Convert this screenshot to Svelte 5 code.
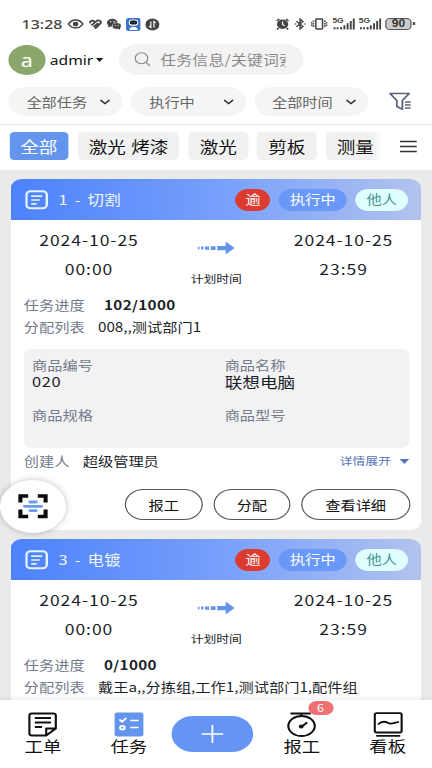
<script lang="ts">
  const filters = ['全部任务', '执行中', '全部时间'];
  const tabs = ['全部', '激光 烤漆', '激光', '剪板', '测量'];
  const signals = [1, 2];

  let activeTab = $state('全部');

  const tasks = [
    {
      title: '1 - 切割',
      progress: '102/1000',
      assigned: '008,,测试部门1',
      detail: { code: '020', product: '联想电脑', creator: '超级管理员' }
    },
    {
      title: '3 - 电镀',
      progress: '0/1000',
      assigned: '戴王a,,分拣组,工作1,测试部门1,配件组',
      detail: null
    }
  ];
</script>

<div class="screen">
  <header class="status">
    <span class="clock">13:28</span>
    <svg class="s-eye" width="14" height="12" viewBox="0 0 14 12" fill="none" stroke="#444" stroke-width="1.5">
      <path d="M1 6C4 .8 10 .8 13 6C10 11.2 4 11.2 1 6Z" />
      <circle cx="7" cy="6" r="2.3" fill="#444" stroke="none" />
    </svg>
    <svg width="11" height="11" viewBox="0 0 11 11" fill="none" stroke="#444" stroke-width="1.7">
      <path d="M1 4.3C.8 1.7 3.2 .8 4.7 2.6M2.2 6.4L6 2.5C8 .3 11.3 2 9.6 4.6L5.2 9.8M4 8.2L7.8 4.2" />
    </svg>
    <svg width="12" height="12" viewBox="0 0 12 12">
      <ellipse cx="4.6" cy="4.7" rx="4.5" ry="3.9" fill="#444" />
      <path d="M1.5 7L1 9.6L4 8.2Z" fill="#444" />
      <ellipse cx="8.3" cy="8" rx="3.7" ry="3.2" fill="#444" stroke="#fff" stroke-width=".5" />
      <path d="M9 10.6L11 11.7L10.8 9.4Z" fill="#444" />
      <g fill="#fff">
        <circle cx="3.2" cy="3.6" r=".6" /><circle cx="6" cy="3.6" r=".6" />
        <circle cx="7.1" cy="7.4" r=".5" /><circle cx="9.4" cy="7.4" r=".5" />
      </g>
    </svg>
    <svg width="12.5" height="13" viewBox="0 0 13 13" preserveAspectRatio="none">
      <rect width="13" height="13" rx="2.5" fill="#3d74cd" />
      <rect x="2.4" y="1.4" width="8.2" height="6.4" rx="3" fill="#fff" />
      <rect x="3.3" y="2.6" width="6.4" height="3.9" rx="1.8" fill="#111" />
      <path d="M3 12C3 7.8 10 7.8 10 12Z" fill="#fff" />
      <path d="M4.8 4.4h1M7.2 4.4h1" stroke="#5ad" stroke-width=".8" />
    </svg>
    <svg width="12" height="13" viewBox="0 0 12 13">
      <ellipse cx="6" cy="6.5" rx="5.9" ry="6.1" fill="#444" />
      <path d="M4.7 3.5V9.5L3.1 8M7.3 9.5V3.5L8.9 5" fill="none" stroke="#fff" stroke-width="1" />
    </svg>
    <div class="status-right">
      <svg width="11" height="12" viewBox="0 0 11 12">
        <circle cx="5.5" cy="6.2" r="4.7" fill="#444" />
        <path d="M.6 3L2.8 .9M10.4 3L8.2 .9M2 10L1 11.5M9 10L10 11.5" stroke="#444" stroke-width="1.4" />
        <path d="M5.5 3.6V6.5L7.3 7.8" fill="none" stroke="#fff" stroke-width="1" />
      </svg>
      <svg width="10" height="12" viewBox="0 0 10 12" fill="none" stroke="#444" stroke-width="1.2">
        <path d="M2 3.2L7.5 8.5L5 11V1L7.5 3.5L2 8.8" />
        <path d="M.3 6h1.5M8.2 6h1.5" />
      </svg>
      <svg width="14" height="12" viewBox="0 0 14 12" fill="none" stroke="#444" stroke-width="1.3">
        <rect x="4.2" y="1" width="5.6" height="10" rx=".8" />
        <path d="M2.2 2.5V9.5M.7 4V8M11.8 2.5V9.5M13.3 4V8" stroke-dasharray="1.6 .8" />
      </svg>
      {#each signals as s (s)}
        <span class="signal">
          <span class="net">5G</span>
          <svg width="19" height="12" viewBox="0 0 19 12" fill="#444">
            <path d="M1 9.3h1.6v2H1zM3.5 9.3h1.6v2H3.5zM6.5 9h1.6v2.5H6.5zM9.2 7.3h1.6v4.2H9.2zM11.9 5.2h1.6v6.3h-1.6zM14.5 3h1.6v8.5h-1.6zM17 .5h1.6v11H17z" />
          </svg>
        </span>
      {/each}
      <span class="battery">90</span>
    </div>
  </header>

  <div class="account">
    <div class="avatar">a</div>
    <span class="user">admir</span>
    <span class="caret"></span>
    <div class="search">
      <svg width="14" height="15" viewBox="0 0 14 15" fill="none" stroke="#888" stroke-width="1.1">
        <ellipse cx="5.9" cy="6.3" rx="5.2" ry="5.5" />
        <path d="M9.6 10.4L13 13.8" />
      </svg>
      <span>任务信息/关键词索</span>
    </div>
  </div>

  <div class="filters">
    {#each filters as f}
      <button class="filter">
        <span>{f}</span>
        <svg width="9" height="6" viewBox="0 0 9 6" fill="none" stroke="#222" stroke-width="1.3">
          <path d="M.8 1L4.5 4.6L8.2 1" />
        </svg>
      </button>
    {/each}
    <svg class="funnel" width="19" height="19" viewBox="0 0 19 19" fill="none" stroke="#596276" stroke-width="1.5">
      <path d="M1 1.5H17L11.3 8.5V17.3L6.7 14.5V8.5Z" stroke-linejoin="round" />
      <path d="M13.4 10h4.8M13.4 13h4.8M13.4 16h4.8" />
    </svg>
  </div>

  <nav class="tabs">
    <div class="tab-list">
      {#each tabs as tab}
        <button class="tab" class:active={tab === activeTab} onclick={() => (activeTab = tab)}>{tab}</button>
      {/each}
    </div>
    <svg width="15" height="13" viewBox="0 0 15 13" stroke="#333" stroke-width="1.4">
      <path d="M.3 1.5H14.300M.3 6.5H14.300M.3 11.500H14.300" />
    </svg>
  </nav>

  <main class="list">
    {#each tasks as task}
      <article class="card">
        <div class="card-head">
          <svg width="19" height="20" viewBox="0 0 19 20" fill="none" stroke="#e6f4ff">
            <rect x="1" y="1.2" width="17" height="17" rx="3.5" stroke-width="2" />
            <path d="M5 6.2H14.2M5 10H12.2M5 13.8H9.5" stroke-width="1.7" />
          </svg>
          <span class="title">{task.title}</span>
          <span class="tag late">逾</span>
          <span class="tag running">执行中</span>
          <span class="tag other">他人</span>
        </div>

        <div class="schedule">
          <div class="date"><span>2024-10-25</span><span>00:00</span></div>
          <div class="plan">
            <svg width="31" height="14" viewBox="0 0 31 14" fill="#6495e8">
              <path d="M0 5.8h1.2v2.6H0zM2.5 5.6h2v3h-2zM5.8 5.4h3.4v3.4H5.8zM10.6 5.3h4v3.6h-4zM16 5h7V.4L30.5 7L23 13.6V9.2H16z" />
            </svg>
            <span>计划时间</span>
          </div>
          <div class="date"><span>2024-10-25</span><span>23:59</span></div>
        </div>

        <div class="row"><span class="label">任务进度</span><b>{task.progress}</b></div>
        <div class="row assigned"><span class="label">分配列表</span><span>{task.assigned}</span></div>

        {#if task.detail}
          <div class="product">
            <div><span class="label">商品编号</span><span class="value">{task.detail.code}</span></div>
            <div><span class="label">商品名称</span><span class="value name">{task.detail.product}</span></div>
            <div><span class="label">商品规格</span></div>
            <div><span class="label">商品型号</span></div>
          </div>

          <div class="creator">
            <span class="label">创建人</span>
            <span>{task.detail.creator}</span>
            <span class="more">详情展开<i></i></span>
          </div>

          <div class="actions">
            <button>报工</button>
            <button>分配</button>
            <button class="wide">查看详细</button>
          </div>
        {/if}
      </article>
    {/each}
  </main>

  <button class="scan" aria-label="scan">
    <svg width="25" height="25" viewBox="0 0 25 25" fill="none">
      <path d="M2 8.5V2H8.5M16.500 2H23V8.500M23 15.500V22.500H16.500M8.500 22.500H2V15.500" stroke="#0c0c0c" stroke-width="3.4" />
      <path d="M10 8H15M5.500 12.300H19.500M10 16.600H15" stroke="#6b9be0" stroke-width="2.800" stroke-linecap="round" />
    </svg>
  </button>

  <footer class="bottom">
    <div class="item">
      <svg width="25" height="25" viewBox="0 0 25 25" fill="none" stroke="#111" stroke-width="1.8">
        <path d="M15.5 23.5H3.5Q1.5 23.5 1.5 21.5V3.5Q1.5 1.5 3.5 1.5H21.5Q23.5 1.5 23.5 3.5V16.500L15.5 23.5V16.500H23.5" stroke-linejoin="round" />
        <path d="M6 6H19.500M6 10.500H19.500M6 15H12" />
      </svg>
      <span>工单</span>
    </div>
    <div class="item">
      <svg width="25" height="25" viewBox="0 0 25 25" fill="none" stroke="#fff" stroke-width="1.7">
        <rect x=".5" y=".5" width="24" height="24" rx="2" fill="#6495ed" stroke="none" />
        <path d="M4.500 7.500L6.700 9.700L10.300 6M13.500 8.500H20.500M13.500 15.500H20.500" />
        <circle cx="7" cy="15.700" r="1.900" />
      </svg>
      <span>任务</span>
    </div>
    <button class="add" aria-label="add">
      <svg width="20" height="20" viewBox="0 0 20 20" stroke="#fff" stroke-width="1.5">
        <path d="M10 1V19M1 10H19" />
      </svg>
    </button>
    <div class="item">
      <svg width="25" height="25" viewBox="0 0 25 25" fill="none" stroke="#111" stroke-width="1.8">
        <path d="M3 1.500H20M12 1.500V4" />
        <ellipse cx="12.300" cy="14" rx="11" ry="10" />
        <path d="M12 15L17 10.300" />
        <circle cx="12" cy="14.500" r="2" fill="#111" stroke="none" />
      </svg>
      <span>报工</span>
      <em>6</em>
    </div>
    <div class="item">
      <svg width="25" height="25" viewBox="0 0 25 25" fill="none" stroke="#111" stroke-width="1.8">
        <rect x="1.300" y="1.200" width="22.400" height="19.300" rx="1.500" />
        <path d="M4 12.500C7 9 9.500 9 12.500 11C15 12.700 17.500 10.500 21.500 9.800M2.500 23.800H22.500" />
      </svg>
      <span>看板</span>
    </div>
  </footer>
</div>

<style>
  :global(body) {
    overflow: hidden;
    background: #fff;
  }

  .screen {
    position: relative;
    width: 360px;
    height: 768px;
    display: flex;
    flex-direction: column;
    overflow: hidden;
    background: #fff;
    color: #1c1f2b;
    font-family: 'Noto Sans CJK SC', sans-serif;
    font-size: 12.7px;
    transform: scaleX(1.2);
    transform-origin: 0 0;
  }

  .screen * {
    box-sizing: border-box;
  }

  svg {
    display: block;
    flex-shrink: 0;
  }

  button {
    font: inherit;
    color: inherit;
    border: none;
    padding: 0;
    margin: 0;
  }

  .status {
    display: flex;
    align-items: center;
    gap: 4px;
    height: 44px;
    padding: 4px 17px 0 18px;
    flex-shrink: 0;
  }

  .clock {
    width: 33.5px;
    font-family: 'Noto Sans', sans-serif;
    font-size: 13.3px;
    font-weight: 500;
    line-height: 18px;
    color: #444;
    white-space: nowrap;
  }

  .status-right {
    display: flex;
    align-items: center;
    gap: 4px;
    margin-left: auto;
  }

  .signal {
    position: relative;
    margin-right: -1px;
  }

  .net {
    position: absolute;
    left: 0;
    top: -1px;
    font-family: 'Liberation Sans', sans-serif;
    font-size: 7px;
    font-weight: 700;
    line-height: 8px;
    color: #444;
  }

  .battery {
    position: relative;
    width: 22px;
    height: 12px;
    border: 1.5px solid #555;
    border-radius: 4px;
    background: #ccc;
    font-family: 'Liberation Sans', sans-serif;
    font-size: 10px;
    font-weight: 700;
    line-height: 10px;
    text-align: center;
    color: #333;
  }

  .battery::after {
    content: '';
    position: absolute;
    right: -3.5px;
    top: 3px;
    width: 1.5px;
    height: 3px;
    background: #555;
  }

  .account {
    display: flex;
    align-items: center;
    height: 31px;
    padding-left: 7px;
    flex-shrink: 0;
  }

  .avatar {
    width: 30.5px;
    height: 30px;
    border-radius: 50%;
    background: #8aa66a;
    color: #fff;
    font-family: 'Noto Sans', sans-serif;
    font-size: 18px;
    line-height: 31px;
    text-align: center;
  }

  .user {
    width: 36px;
    margin-left: 4px;
    font-family: 'Noto Sans', sans-serif;
    font-size: 13px;
    line-height: 20px;
    color: #111;
  }

  .caret {
    margin: 1px 0 0 2px;
    border: 3.5px solid transparent;
    border-top: 4px solid #111;
    border-bottom: 0;
  }

  .search {
    display: flex;
    align-items: center;
    width: 154.5px;
    height: 31px;
    margin-left: 13px;
    padding: 0 15px 0 13.5px;
    border-radius: 16px;
    background: #f3f3f3;
  }

  .search span {
    flex: 1;
    margin-left: 7.5px;
    overflow: hidden;
    font-size: 13.2px;
    line-height: 20px;
    letter-spacing: 0.2px;
    color: #8a8a8a;
    white-space: nowrap;
  }

  .filters {
    display: flex;
    align-items: center;
    gap: 7px;
    height: 50px;
    padding: 4px 0 0 7px;
    border-bottom: 1px solid #e8e8e8;
    flex-shrink: 0;
  }

  .filter {
    display: flex;
    align-items: center;
    justify-content: space-between;
    width: 95.3px;
    height: 29px;
    padding: 0 10px 0 15px;
    border-radius: 15px;
    background: #f5f5f5;
    color: #666;
  }

  .funnel {
    margin-left: 10px;
  }

  .tabs {
    display: flex;
    align-items: center;
    height: 45px;
    padding: 0 12px 3px 7.7px;
    flex-shrink: 0;
  }

  .tab-list {
    position: relative;
    display: flex;
    gap: 7.9px;
    width: 311px;
    margin-right: 14px;
    overflow: hidden;
  }

  .tab-list::after {
    content: '';
    position: absolute;
    right: 0;
    top: 0;
    width: 9px;
    height: 28px;
    background: linear-gradient(90deg, rgba(255, 255, 255, 0), #fff);
  }

  .tab {
    height: 28px;
    padding: 0 9.1px;
    border-radius: 4px;
    background: #f1f1f1;
    color: #111;
    font-size: 15.5px;
    line-height: 26px;
    word-spacing: 1px;
    white-space: nowrap;
    flex-shrink: 0;
  }

  .tab.active {
    background: #6495ed;
    color: #fff;
  }

  .list {
    display: flex;
    flex-direction: column;
    gap: 9px;
    flex: 1;
    min-height: 0;
    padding: 9px 9.2px 0;
    overflow: hidden;
    background: #eaeaea;
  }

  .card {
    height: 351px;
    flex-shrink: 0;
    border-radius: 9px;
    overflow: hidden;
    background: #fff;
  }

  .card-head {
    display: flex;
    align-items: center;
    height: 41px;
    padding: 0 10.8px 0 11.5px;
    background: linear-gradient(90deg, #4c82fb, #7ba2fb 55%, #b2c3ed);
    color: #f1f6ff;
  }

  .title {
    flex: 1;
    margin-left: 9px;
    font-size: 13.7px;
    line-height: 18px;
    letter-spacing: 0.2px;
    word-spacing: 2.5px;
    margin-top: -2px;
  }

  .tag {
    height: 22px;
    margin-left: 7px;
    padding: 0 9.3px;
    border-radius: 11px;
    line-height: 20px;
  }

  .late {
    padding: 0 8.2px;
    background: #dd3b30;
    color: #fff;
  }

  .running {
    background: #6998f8;
    color: #fff;
  }

  .other {
    background: #e0fdff;
    color: #46968f;
  }

  .schedule {
    display: flex;
    justify-content: space-between;
    height: 75px;
    padding: 6px 21.5px 0 22px;
  }

  .date {
    display: flex;
    flex-direction: column;
    align-items: center;
    width: 86px;
    font-size: 14.6px;
    line-height: 28.5px;
    letter-spacing: 0.8px;
    white-space: nowrap;
  }

  .plan {
    display: flex;
    flex-direction: column;
    align-items: center;
    padding-top: 15px;
    font-size: 10.7px;
    line-height: 16px;
  }

  .plan span {
    margin-top: 16px;
  }

  .row {
    display: flex;
    height: 22px;
    padding-left: 10.7px;
    line-height: 20px;
    white-space: nowrap;
  }

  .row b {
    margin-left: 16px;
    font-size: 12.7px;
    letter-spacing: 0.3px;
  }

  .label {
    color: #737b8c;
  }

  .assigned span + span {
    margin-left: 11px;
  }

  .product {
    display: grid;
    grid-template-columns: 160.5px 1fr;
    grid-template-rows: 50px 40px;
    height: 99px;
    margin: 10px 9.5px 0 10.5px;
    padding: 7px 0 0 7px;
    border-radius: 6px;
    background: #f2f2f2;
    line-height: 17px;
  }

  .product span {
    display: block;
  }

  .value {
    font-size: 13.7px;
    letter-spacing: 0.5px;
  }

  .name {
    font-size: 14.7px;
    letter-spacing: 0;
  }

  .creator {
    display: flex;
    align-items: center;
    height: 26px;
    padding: 0 10px 0 10.7px;
    line-height: 20px;
  }

  .creator span + span {
    margin-left: 11px;
  }

  .creator .more {
    display: flex;
    align-items: center;
    margin-left: auto;
    font-size: 10.7px;
    color: #5475b8;
  }

  .more i {
    margin-left: 7px;
    border: 4.2px solid transparent;
    border-top: 5.5px solid #5475b8;
    border-bottom: 0;
  }

  .actions {
    display: flex;
    justify-content: flex-end;
    gap: 9px;
    padding: 15px 9.2px 0;
  }

  .actions button {
    width: 64.5px;
    height: 31px;
    border: 1px solid #555;
    border-radius: 16px;
    background: #fff;
    color: #111;
    line-height: 28px;
  }

  .actions .wide {
    width: 90.5px;
  }

  .scan {
    position: absolute;
    left: 0;
    top: 480px;
    display: flex;
    align-items: center;
    justify-content: center;
    width: 54.5px;
    height: 53px;
    border-radius: 50%;
    background: #fff;
    box-shadow: 0 0 6px rgba(0, 0, 0, 0.25);
  }

  .bottom {
    display: flex;
    height: 68px;
    flex-shrink: 0;
    background: #fff;
    box-shadow: 0 -2px 5px rgba(0, 0, 0, 0.06);
    z-index: 1;
  }

  .item {
    position: relative;
    display: flex;
    flex-direction: column;
    align-items: center;
    width: 71.6px;
    padding-top: 11.5px;
  }

  .item span {
    margin-top: -2px;
    font-size: 15.3px;
    line-height: 20px;
    color: #111;
  }

  .add {
    display: flex;
    align-items: center;
    justify-content: center;
    width: 67.5px;
    height: 36px;
    margin: 16px 4.8px 0 0.2px;
    border-radius: 18px;
    background: #6495f5;
  }

  .item em {
    position: absolute;
    left: 41px;
    top: 1px;
    width: 21px;
    height: 14px;
    border-radius: 7px;
    background: #ef7070;
    color: #fff;
    font-size: 10.5px;
    font-style: normal;
    line-height: 13px;
    text-align: center;
  }
</style>
